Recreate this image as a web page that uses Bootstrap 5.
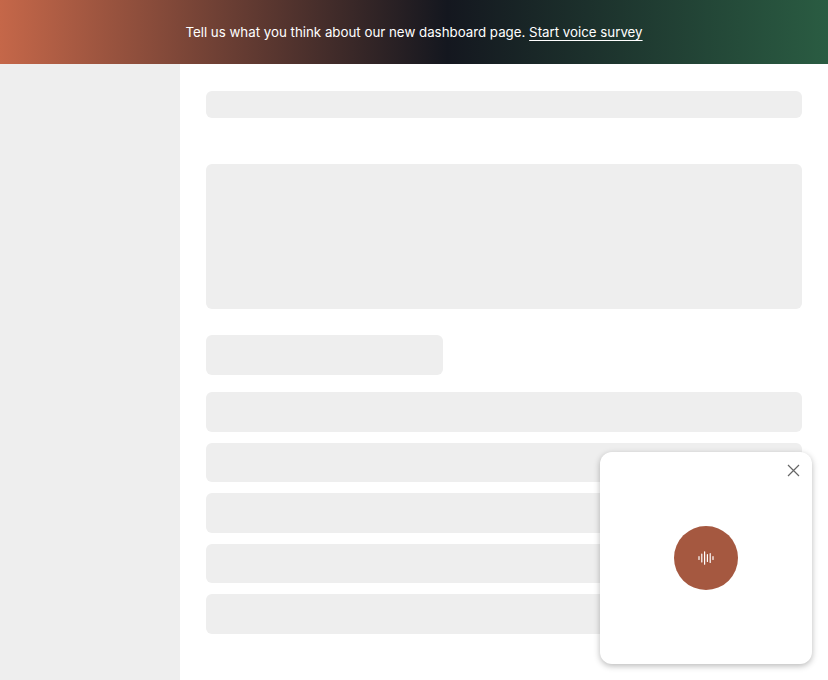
<!DOCTYPE html>
<html lang="en">
<head>
    <meta charset="UTF-8">
    <meta name="viewport" content="width=device-width, initial-scale=1.0">
    <title>Dashboard</title>
    <link href="https://cdn.jsdelivr.net/npm/bootstrap@5.3.0/dist/css/bootstrap.min.css" rel="stylesheet">
    <style>
        html, body { height: 100%; }
        body { overflow: hidden; font-family: Inter, "Liberation Sans", sans-serif; }

        /* Banner atas */
        .survey-banner {
            height: 64px;
            padding-top: 2px;
            background: linear-gradient(90deg, #c56749 0%, #14171f 54%, #2a5c42 100%);
            font-size: 13.3px;
        }
        .survey-banner a { color: #fff; text-underline-offset: 3px; }

        .page-body { height: 616px; }
        .side-panel { width: 180px; background: #eeeeee; }
        .main-panel { padding: 27px 26.5px 0 26px; }

        /* Placeholder blok */
        .skel { background: #eeeeee; border-radius: 6px; }
        .skel-title { height: 27px; margin-bottom: 46px; }
        .skel-hero { height: 145px; margin-bottom: 26px; }
        .skel-sub { height: 39.5px; width: 237px; margin-bottom: 17.5px; }
        .skel-rows { gap: 11px; }
        .skel-row { height: 39.5px; }

        /* Widget voice survey */
        .voice-widget {
            right: 16px;
            bottom: 16px;
            width: 212px;
            height: 212px;
            border-radius: 12px;
            box-shadow: 0 2px 6px rgba(0, 0, 0, 0.28);
        }
        .voice-close { top: 12px; right: 12px; line-height: 0; }
        .voice-btn { width: 64px; height: 64px; background: #a55840; }
    </style>
</head>
<body class="bg-white">

    <div class="survey-banner d-flex align-items-center justify-content-center text-white">
        <span>Tell us what you think about our new dashboard page. <a href="#">Start voice survey</a></span>
    </div>

    <div class="page-body d-flex">
        <div class="side-panel flex-shrink-0"></div>
        <div class="main-panel flex-grow-1">
            <div class="skel skel-title"></div>
            <div class="skel skel-hero"></div>
            <div class="skel skel-sub"></div>
            <div class="skel-rows d-flex flex-column">
                <div class="skel skel-row"></div>
                <div class="skel skel-row"></div>
                <div class="skel skel-row"></div>
                <div class="skel skel-row"></div>
                <div class="skel skel-row"></div>
            </div>
        </div>
    </div>

    <div class="voice-widget position-fixed bg-white d-flex align-items-center justify-content-center">
        <span class="voice-close position-absolute">
            <svg width="13" height="13" viewBox="0 0 13 13" fill="none" stroke="#666" stroke-width="1.2">
                <path d="M1 1l11 11M12 1L1 12"/>
            </svg>
        </span>
        <div class="voice-btn rounded-circle d-flex align-items-center justify-content-center">
            <svg width="16" height="14" viewBox="0 0 16 14" fill="none" stroke="#fff" stroke-width="1.2" stroke-linecap="round">
                <path d="M1 5.5v3M3.8 3v8M6.6 0.8v12.4M9.4 3.5v7M12.2 2.5v9M15 5.5v3"/>
            </svg>
        </div>
    </div>

    <script src="https://cdn.jsdelivr.net/npm/bootstrap@5.3.0/dist/js/bootstrap.bundle.min.js"></script>
</body>
</html>
